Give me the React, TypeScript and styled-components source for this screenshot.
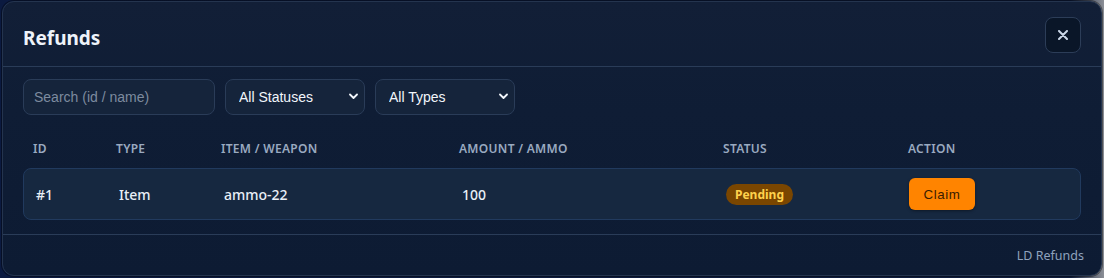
import React from "react";
import styled, { createGlobalStyle } from "styled-components";

const Global = createGlobalStyle`
  html, body { margin: 0; padding: 0; }
  body {
    background: #0a1a3a;
    font-family: "Segoe UI", "Noto Sans", "Open Sans", sans-serif;
    overflow: hidden;
  }
  * { box-sizing: border-box; }
`;

const Page = styled.div`
  width: 1104px;
  height: 278px;
  padding: 1px 2px 2px 2px;
  background: linear-gradient(90deg, #0b1a40 0%, #0e1c3c 97%, #8c8f96 100%);
`;

const Modal = styled.div`
  width: 1100px;
  height: 275px;
  border-radius: 12px;
  border: 1px solid #24344e;
  background: linear-gradient(180deg, #121f37 0%, #0f1d35 40%, #0d1b33 100%);
  display: flex;
  flex-direction: column;
  overflow: hidden;
  box-shadow: 0 0 0 1px rgba(0, 0, 0, 0.4);
`;

const Header = styled.div`
  height: 65px;
  display: flex;
  align-items: center;
  justify-content: space-between;
  padding: 0 20px 0 20px;
  border-bottom: 1px solid #2a3c58;
`;

const Title = styled.h2`
  margin: 8px 0 0 0;
  font-size: 19px;
  font-weight: 700;
  color: #eef3fa;
  letter-spacing: 0;
`;

const CloseButton = styled.button`
  width: 36px;
  height: 36px;
  border-radius: 8px;
  border: 1px solid #2c3d58;
  background: #0a1628;
  color: #c9d6e8;
  display: flex;
  align-items: center;
  justify-content: center;
  padding: 0;
  margin-top: 2px;
`;

const Body = styled.div`
  flex: 1;
  padding: 12px 20px 14px 20px;
  border-bottom: 1px solid #2a3c58;
`;

const Filters = styled.div`
  display: flex;
  gap: 10px;
`;

const SearchInput = styled.input`
  width: 192px;
  height: 36px;
  border-radius: 8px;
  border: 1px solid #2a3c58;
  background: #15243b;
  color: #e6edf6;
  padding: 0 10px;
  font-family: "Liberation Sans", Arial, sans-serif;
  font-size: 14px;
  outline: none;
  &::placeholder { color: #7d8b9f; }
`;

const SelectWrap = styled.div`
  position: relative;
  width: 140px;
  height: 36px;
`;

const Select = styled.select`
  appearance: none;
  width: 100%;
  height: 100%;
  border-radius: 8px;
  border: 1px solid #2a3c58;
  background: #15243b;
  color: #f2f6fb;
  padding: 0 24px 0 13px;
  font-family: "Liberation Sans", Arial, sans-serif;
  font-size: 14px;
  outline: none;
`;

const Chevron = styled.svg`
  position: absolute;
  right: 7px;
  top: 14px;
  pointer-events: none;
`;

const TableHead = styled.div`
  display: grid;
  grid-template-columns: 83px 105px 238px 264px 185px 1fr;
  padding: 25px 0 0 10px;
  height: 53px;
`;

const HeadCell = styled.div`
  font-size: 12px;
  font-weight: 600;
  letter-spacing: 0.3px;
  color: #9aaac0;
  text-transform: uppercase;
`;

const Row = styled.div`
  display: grid;
  grid-template-columns: 83px 105px 238px 264px 185px 1fr;
  align-items: center;
  height: 52px;
  padding-left: 12px;
  border: 1px solid #213a5e;
  border-radius: 8px;
  background: #162840;
`;

const Cell = styled.div`
  font-size: 14px;
  font-weight: 500;
  color: #e9eff7;
`;

const Badge = styled.span<{ $tone: "pending" | "done" }>`
  display: inline-flex;
  align-items: center;
  height: 21px;
  padding: 0 9px;
  border-radius: 11px;
  font-size: 12px;
  font-weight: 700;
  background: ${(p) => (p.$tone === "pending" ? "#7a4600" : "#14532d")};
  color: ${(p) => (p.$tone === "pending" ? "#ffd24d" : "#86efac")};
`;

const ClaimButton = styled.button`
  width: 66px;
  height: 32px;
  border-radius: 6px;
  border: none;
  background: #ff8400;
  color: #3a1c00;
  font-family: "Liberation Sans", Arial, sans-serif;
  font-size: 13.33px;
  font-weight: 400;
  letter-spacing: 0.6px;
  margin-left: -2px;
  box-shadow: 0 1px 3px rgba(0, 0, 0, 0.4);
`;

const Footer = styled.div`
  height: 40px;
  display: flex;
  align-items: center;
  justify-content: flex-end;
  padding: 0 17px 0 20px;
  font-size: 12.5px;
  color: #8fa2bd;
`;

const refunds = [
  { id: 1, type: "Item", item: "ammo-22", amount: 100, status: "Pending" },
];

const ChevronIcon = () => (
  <Chevron width="9" height="7" viewBox="0 0 9 7">
    <path d="M1 1.5 L4.5 5 L8 1.5" fill="none" stroke="#f2f6fb" strokeWidth="1.8" strokeLinecap="round" strokeLinejoin="round" />
  </Chevron>
);

export default function App() {
  return (
    <>
      <Global />
      <Page>
        <Modal>
          <Header>
            <Title>Refunds</Title>
            <CloseButton aria-label="Close">
              <svg width="10" height="10" viewBox="0 0 10 10">
                <path d="M1 1 L9 9 M9 1 L1 9" stroke="#cbd7e8" strokeWidth="2" strokeLinecap="round" />
              </svg>
            </CloseButton>
          </Header>
          <Body>
            <Filters>
              <SearchInput placeholder="Search (id / name)" />
              <SelectWrap>
                <Select defaultValue="all">
                  <option value="all">All Statuses</option>
                  <option value="pending">Pending</option>
                  <option value="claimed">Claimed</option>
                </Select>
                <ChevronIcon />
              </SelectWrap>
              <SelectWrap>
                <Select defaultValue="all">
                  <option value="all">All Types</option>
                  <option value="item">Item</option>
                  <option value="weapon">Weapon</option>
                </Select>
                <ChevronIcon />
              </SelectWrap>
            </Filters>
            <TableHead>
              <HeadCell>ID</HeadCell>
              <HeadCell>Type</HeadCell>
              <HeadCell>Item / Weapon</HeadCell>
              <HeadCell>Amount / Ammo</HeadCell>
              <HeadCell>Status</HeadCell>
              <HeadCell>Action</HeadCell>
            </TableHead>
            {refunds.map((r) => (
              <Row key={r.id}>
                <Cell>#{r.id}</Cell>
                <Cell>{r.type}</Cell>
                <Cell>{r.item}</Cell>
                <Cell>{r.amount}</Cell>
                <Cell>
                  <Badge $tone="pending">{r.status}</Badge>
                </Cell>
                <Cell>
                  <ClaimButton>Claim</ClaimButton>
                </Cell>
              </Row>
            ))}
          </Body>
          <Footer>LD Refunds</Footer>
        </Modal>
      </Page>
    </>
  );
}
